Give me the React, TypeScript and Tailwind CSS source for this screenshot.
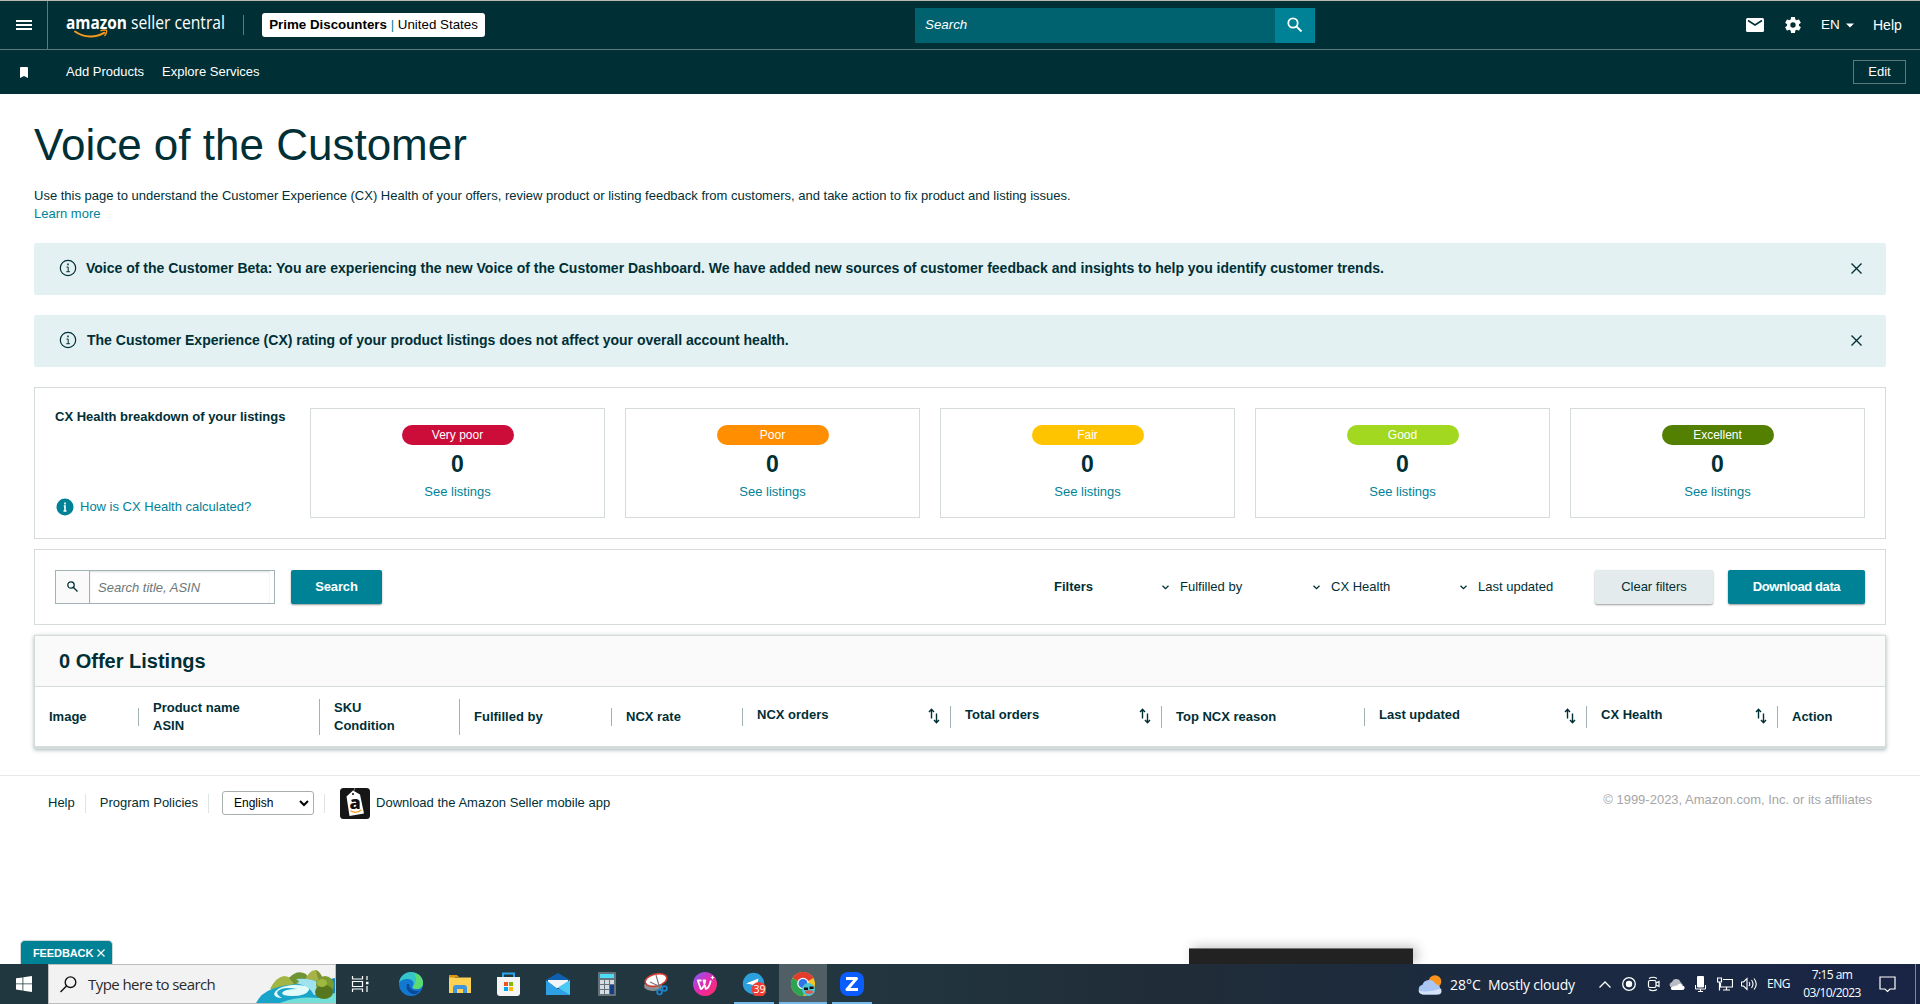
import { FC, ReactNode } from 'react';

const ratings = [
  { label: 'Very poor', color: 'bg-[#cc0c39]' },
  { label: 'Poor', color: 'bg-[#ff8f00]' },
  { label: 'Fair', color: 'bg-[#ffc400]' },
  { label: 'Good', color: 'bg-[#a2d820]' },
  { label: 'Excellent', color: 'bg-[#538000]' },
];

const filters = [
  { label: 'Fulfilled by', width: 'w-[151px]' },
  { label: 'CX Health', width: 'w-[147px]' },
  { label: 'Last updated', width: 'w-[136px]' },
];

interface Column {
  lines: string[];
  width: string;
  sortable?: boolean;
}

const columns: Column[] = [
  { lines: ['Image'], width: 'w-[104px]' },
  { lines: ['Product name', 'ASIN'], width: 'w-[181px]' },
  { lines: ['SKU', 'Condition'], width: 'w-[140px]' },
  { lines: ['Fulfilled by'], width: 'w-[152px]' },
  { lines: ['NCX rate'], width: 'w-[131px]' },
  { lines: ['NCX orders'], width: 'w-[208px]', sortable: true },
  { lines: ['Total orders'], width: 'w-[211px]', sortable: true },
  { lines: ['Top NCX reason'], width: 'w-[203px]' },
  { lines: ['Last updated'], width: 'w-[222px]', sortable: true },
  { lines: ['CX Health'], width: 'w-[191px]', sortable: true },
  { lines: ['Action'], width: 'w-[94px]' },
];

const Logo: FC = () => (
  <svg className="ml-[14px] h-[34px] w-[166px]" viewBox="-4 -2 166 34">
    <text x="0" y="19" textLength="61" lengthAdjust="spacingAndGlyphs" fill="#fff" fontFamily="'Open Sans', sans-serif" fontWeight="700" fontSize="18">amazon</text>
    <text x="65" y="18.500" textLength="94" lengthAdjust="spacingAndGlyphs" fill="#fff" fontFamily="'Open Sans', sans-serif" fontSize="18.500">seller central</text>
    <path d="M9 21.500c9 6.500 21 6.500 29.500 1.200" fill="none" stroke="#f7981d" strokeWidth="2" strokeLinecap="round" />
    <path d="M35 20.700c2-.9 5-.9 5.600-.2.500.9-.4 3.600-1.800 5" fill="none" stroke="#f7981d" strokeWidth="1.300" strokeLinecap="round" />
  </svg>
);

const Header: FC = () => (
  <header className="bg-[#002f36] text-[13px] text-white">
    <div className="flex h-[50px] items-center border-t border-b border-t-[#b9b9ae] border-b-[#5c7a7e]">
      <button className="flex h-[48px] w-[48px] items-center justify-center border-r border-[#5c7a7e]">
        <svg width="16" height="12" viewBox="0 0 16 12" fill="#fff">
          <path d="M0 1h16v2H0zM0 5h16v2H0zM0 9h16v2H0z" />
        </svg>
      </button>
      <Logo />
      <div className="ml-[15px] h-5 w-px bg-[#5c7a7e]" />
      <div className="ml-[18px] flex h-6 w-[223px] items-center justify-center rounded-[3px] bg-white text-[13.330px] whitespace-pre text-black">
        <b>Prime Discounters</b>
        <span className="text-[#008296]"> | </span>United States
      </div>
      <div className="ml-[430px] flex h-[35px] w-[400px]">
        <div className="flex flex-1 items-center bg-[#00616f] pl-[10px] text-[13.330px] italic">Search</div>
        <div className="flex w-10 items-center justify-center bg-[#008296]">
          <svg width="16" height="16" viewBox="0 0 16 16" fill="none" stroke="#fff" strokeWidth="1.800">
            <circle cx="6" cy="6" r="4.700" />
            <path d="M9.500 9.500l5 5" />
          </svg>
        </div>
      </div>
      <div className="ml-[431px] flex flex-1 items-center">
        <svg width="18" height="14" viewBox="0 0 18 14">
          <rect width="18" height="14" rx="1.500" fill="#fff" />
          <path d="M2 2.500l7 4.500 7-4.500" fill="none" stroke="#002f36" strokeWidth="1.500" />
        </svg>
        <svg className="ml-[19px]" width="20" height="20" viewBox="0 0 24 24" fill="#fff">
          <path d="M19.140 12.940c.04-.3.060-.61.060-.94s-.02-.64-.07-.94l2.030-1.580a.49.490 0 0 0 .12-.61l-1.920-3.320a.49.490 0 0 0-.59-.22l-2.390.96c-.5-.38-1.030-.7-1.620-.94l-.36-2.540a.48.480 0 0 0-.48-.41h-3.840c-.24 0-.43.170-.47.410l-.36 2.540c-.59.240-1.130.570-1.620.940l-2.390-.96a.48.480 0 0 0-.59.220L2.740 8.870c-.12.210-.08.470.120.610l2.030 1.580c-.05.3-.09.630-.09.940s.02.640.070.940l-2.030 1.580a.49.490 0 0 0-.12.610l1.920 3.320c.12.220.370.290.590.220l2.390-.96c.5.380 1.030.7 1.620.940l.36 2.540c.05.240.240.410.480.410h3.840c.24 0 .44-.17.470-.41l.36-2.540c.59-.24 1.130-.56 1.620-.94l2.390.96c.22.080.470 0 .59-.22l1.920-3.320a.48.480 0 0 0-.12-.61zM12 15.200a3.200 3.200 0 1 1 0-6.400 3.200 3.200 0 0 1 0 6.400z" />
        </svg>
        <span className="ml-[18px] w-[19px] text-[13.500px]">EN</span>
        <svg className="ml-[6px]" width="8" height="5" viewBox="0 0 8 5"><path d="M0 .5h8l-4 4z" fill="#fff" /></svg>
        <span className="ml-[19px] text-[14px]">Help</span>
      </div>
    </div>
    <div className="flex h-11 items-center">
      <svg className="ml-5" width="8" height="11" viewBox="0 0 8 11"><path d="M0 1q0-1 1-1h6q1 0 1 1v10L4 9l-4 2z" fill="#fff" /></svg>
      <span className="ml-[38px]">Add Products</span>
      <span className="ml-[18px]">Explore Services</span>
      <span className="mr-[14px] ml-auto flex h-6 w-[53px] items-center justify-center border border-[#5c7a7e]">Edit</span>
    </div>
  </header>
);

const Banner: FC<{ children: ReactNode }> = ({ children }) => (
  <div className="mb-5 flex h-[52px] items-center rounded-[2px] bg-[#e3f1f2] pr-[24px] pl-[25px] text-[14px] font-bold whitespace-nowrap">
    <svg className="-mt-[2px]" width="18" height="18" viewBox="0 0 18 18" fill="none" stroke="#002f36">
      <circle cx="9" cy="9" r="7.700" strokeWidth="1.200" />
      <path d="M7.500 8h1.700v4.500M7.300 12.700h3.600" />
      <path d="M9 4.500v1.700" strokeWidth="1.500" />
    </svg>
    {children}
    <svg className="-mt-[2px] ml-auto" width="11" height="11" viewBox="0 0 11 11" stroke="#002f36" strokeWidth="1.400">
      <path d="M.5.5l10 10M10.500.5l-10 10" />
    </svg>
  </div>
);

const HealthBreakdown: FC = () => (
  <section className="flex h-[152px] border border-[#d5dbdb] pt-5 pl-5">
    <div className="flex w-[255px] flex-col whitespace-nowrap">
      <b className="leading-[18px]">CX Health breakdown of your listings</b>
      <div className="mt-[71px] flex items-center text-[#008296]">
        <svg className="mr-[6px] ml-[1px]" width="18" height="18" viewBox="0 0 18 18">
          <circle cx="9" cy="9" r="8.500" fill="#008296" />
          <path d="M9 4.500v2M7.800 8H9v5M7.500 13h3" stroke="#fff" strokeWidth="1.600" fill="none" />
        </svg>
        How is CX Health calculated?
      </div>
    </div>
    <div className="flex gap-5">
      {ratings.map((rating) => (
        <div key={rating.label} className="flex h-[110px] w-[295px] flex-col items-center border border-[#d5dbdb] pt-4">
          <span className={`${rating.color} flex h-5 w-[112px] items-center justify-center rounded-full text-[12px] text-white`}>
            {rating.label}
          </span>
          <span className="mt-[5px] text-[23px] leading-[28px] font-bold">0</span>
          <span className="mt-[5px] leading-[18px] text-[#008296]">See listings</span>
        </div>
      ))}
    </div>
  </section>
);

const FilterBar: FC = () => (
  <section className="mt-[10px] flex h-[76px] items-center border border-[#d5dbdb] px-5">
    <div className="flex h-[34px] w-[220px] border border-[#a2b1b3]">
      <div className="flex w-[34px] items-center justify-center border-r border-[#a2b1b3] bg-[#fafafa]">
        <svg className="-mt-[2px]" width="11" height="11" viewBox="0 0 11 11" fill="none" stroke="#002f36" strokeWidth="1.300">
          <circle cx="4" cy="4" r="3.200" />
          <path d="M6.500 6.500l4 4" />
        </svg>
      </div>
      <input
        className="w-[180px] pt-[2px] pl-2 text-[13px] italic shadow-[inset_0_1px_2px_rgba(0,47,54,0.15)] outline-none placeholder:text-[#6c7778]"
        placeholder="Search title, ASIN"
      />
    </div>
    <button className="ml-4 h-[34px] w-[91px] rounded-[2px] bg-[#008296] font-bold tracking-[-0.010em] text-white shadow-[0_1px_2px_rgba(0,0,0,0.4)]">Search</button>
    <b className="ml-auto w-[107px]">Filters</b>
    {filters.map((filter) => (
      <div key={filter.label} className={`${filter.width} flex items-center`}>
        <svg className="mr-[11px] ml-[1px]" width="7" height="5" viewBox="0 0 7 5" fill="none" stroke="#002f36" strokeWidth="1.300">
          <path d="M.5.700l3 3 3-3" />
        </svg>
        {filter.label}
      </div>
    ))}
    <button className="h-[34px] w-[118px] rounded-[2px] bg-[#e3ebec] shadow-[0_1px_2px_rgba(0,0,0,0.4)]">Clear filters</button>
    <button className="ml-[15px] h-[34px] w-[137px] rounded-[2px] bg-[#008296] font-bold tracking-[-0.030em] text-white shadow-[0_1px_2px_rgba(0,0,0,0.4)]">Download data</button>
  </section>
);

const Listings: FC = () => (
  <section className="mt-[10px] h-[114px] border border-b-[3px] border-[#d5dbdb] shadow-[0_1px_4px_rgba(0,47,54,0.35)]">
    <h2 className="flex h-[51px] items-center border-b border-[#d5dbdb] bg-[#fafafa] pl-6 text-[20px] font-bold">0 Offer Listings</h2>
    <div className="flex h-[60px] items-center font-bold whitespace-nowrap">
      {columns.map((column, i) => (
        <div
          key={i}
          className={`${column.width} ${column.sortable ? 'h-[22px]' : ''} ${i < columns.length - 1 ? 'border-r border-[#a2b1b3]' : ''} flex justify-between pl-[14px] leading-[18px]`}
        >
          <div>
            {column.lines.map((line) => <div key={line}>{line}</div>)}
          </div>
          {column.sortable && (
            <svg className="mt-[2px] mr-[10px]" width="12" height="16" viewBox="0 0 12 16" fill="none" stroke="#002f36" strokeWidth="1.400">
              <path d="M3.500 10.500V1.500M1 4l2.500-2.700L6 4M8.500 5.500v9M6 12l2.500 2.700L11 12" />
            </svg>
          )}
        </div>
      ))}
    </div>
  </section>
);

const Footer: FC = () => (
  <footer className="mt-[26px] flex h-[60px] items-start border-t border-[#e7e9e9] pt-[11px]">
    <div className="ml-12 flex h-8 items-center whitespace-nowrap">
      <span>Help</span>
      <i className="mr-[14px] ml-[10px] h-[19px] w-px bg-[#e0e4e4]" />
      <span>Program Policies</span>
      <i className="mr-[13px] ml-[10px] h-[19px] w-px bg-[#e0e4e4]" />
      <div className="flex h-6 w-[92px] items-center justify-between rounded-[3px] border border-[#a8aeae] pr-[4px] pl-[11px] text-[12px] text-black">
        English
        <svg width="10" height="7" viewBox="0 0 10 7" fill="none" stroke="#000" strokeWidth="2"><path d="M1 1l4 4 4-4" /></svg>
      </div>
      <i className="mr-[15px] ml-[10px] h-[19px] w-px bg-[#e0e4e4]" />
      <svg className="mr-[6px]" width="30" height="31" viewBox="0 0 30 31">
        <rect width="30" height="31" rx="3.500" fill="#161616" />
        <path d="M15 0q-3 5-1.500 8" stroke="#888" fill="none" />
        <path d="M6.500 8.500L13 2.500l7 4L24 25.500 9.500 28z" fill="#fff" />
        <circle cx="13" cy="6" r="1.100" fill="#161616" />
        <text x="9.500" y="20.500" fontFamily="'Open Sans', sans-serif" fontWeight="800" fontSize="18" fill="#111">a</text>
        <path d="M10.500 22.800q6 3.500 11-1" stroke="#f7981d" strokeWidth="1.300" fill="none" />
      </svg>
      Download the Amazon Seller mobile app
    </div>
    <span className="mt-[3px] mr-12 ml-auto text-[#a6a6a6]">© 1999-2023, Amazon.com, Inc. or its affiliates</span>
  </footer>
);

const TaskIcon: FC<{ active?: boolean; open?: boolean; children: ReactNode }> = ({ active, open, children }) => (
  <div className="flex h-10 w-[49px] flex-col items-center pl-px">
    <div className={`${active ? 'w-12 bg-[#4f5f65]' : 'w-10'} flex h-[38px] items-center justify-center pt-[2px]`}>
      <svg width="24" height="24" viewBox="0 0 24 24">{children}</svg>
    </div>
    {open && <div className={`${active ? 'w-12' : 'w-10'} h-[2px] bg-[#76b9ed]`} />}
  </div>
);

// river and hills shown at the end of the search box
const SearchArt: FC = () => (
  <svg className="ml-auto" width="79" height="38" viewBox="0 0 79 38">
    <path d="M14 24Q20 12 28 11q6 0 10 6l4 10z" fill="#a3b545" />
    <path d="M33 13q8-9 17-4l6 10H38z" fill="#6f9436" />
    <path d="M48 18Q52 5 60 5q5 2 8 12l2 8H52z" fill="#a7b348" />
    <path d="M60 5q5 2 8 12v6q-6-6-8-18z" fill="#7e9334" />
    <path d="M66 16l13-3v25H62z" fill="#1b87b5" />
    <path d="M0 38q5-10 16-14 14-5 30-5-8-6 3-5 16 1 20 11 4 8 1 13z" fill="#19a5c9" />
    <path d="M40 14q16-1 22 4l14-3-8 8q2 6-10 7-4-9-18-12 6-1 0-4z" fill="#9fe3ef" />
    <path d="M18 29q3-8 20-9 16 0 15 5-3 6-17 6-10 0-10-3 2-4 15-4-14-3-19 2-3 3 4 7-7 0-8-4z" fill="#e3fafa" />
    <path d="M24 38q18-7 38-5l17-5v10z" fill="#72e0d8" />
    <ellipse cx="69" cy="20" rx="9" ry="9" fill="#7b9b30" />
    <ellipse cx="68" cy="27" rx="9" ry="7" fill="#56761f" />
    <ellipse cx="66" cy="18" rx="5" ry="4" fill="#9fb840" />
  </svg>
);

const Taskbar: FC = () => (
  <div className="flex h-10 items-center bg-[linear-gradient(90deg,#21373f_0%,#22363f_45%,#202c37_61%,#1b2a41_80%,#192445_100%)] font-['Open_Sans','Noto_Sans',sans-serif] whitespace-nowrap text-white">
    <div className="flex w-12 items-center justify-center">
      <svg width="16" height="16" viewBox="0 0 16 16" fill="#fff"><path d="M0 2.300L6.500 1.400v6.100H0zM7.300 1.300L16 0v7.500H7.300zM0 8.300h6.500v6.200L0 13.600zM7.300 8.300H16V16l-8.700-1.300z" /></svg>
    </div>
    <div className="flex h-10 w-[288px] items-center border border-[#bdbdbd] bg-[#f2f2f2] text-[#2b2b2b]">
      <svg className="ml-[11px]" width="17" height="17" viewBox="0 0 17 17" fill="none" stroke="#111" strokeWidth="1.400"><circle cx="10.500" cy="6.200" r="5.300" /><path d="M6.500 10L.5 16" /></svg>
      <span className="ml-[11px] text-[15px] tracking-[-0.038em]">Type here to search</span>
      <SearchArt />
    </div>
    <div className="mr-[2px] flex w-12 justify-center">
      <svg width="24" height="24" viewBox="0 0 24 24" fill="none" stroke="#fff" strokeWidth="1.200">
        <path d="M4.500 4v3h10V4M4.500 20v-3h10v3M4.500 9.500h10v5h-10zM19 4v4M19 14v6" />
        <path d="M18 11h2.500" strokeWidth="2.500" />
      </svg>
    </div>
    <TaskIcon>
      <circle cx="12" cy="12" r="12" fill="#1379d0" />
      <path d="M0 11C1 4 6 0 12 0c7 0 12 5 12 11 0 4-3 6-7 6-3 0-4-1-3-3 2-4-1-7-5-7-5 0-8 2-9 4z" fill="#35c6c9" />
      <path d="M15 1c6 1 9 6 9 10 0 4-3 6-7 6-3 0-4-1-3-3 4-3 4-8 1-13z" fill="#5edb70" />
      <path d="M8 12c-2 6 3 11 9 10l5-4c-4 2-12 1-12-6z" fill="#0c4a9c" />
    </TaskIcon>
    <TaskIcon>
      <path d="M1 3h8l2 2h-4v5H1z" fill="#d99412" />
      <path d="M1 5.500h22V21H1z" fill="#ffd253" />
      <path d="M5 21v-5q0-3 3-3h8q3 0 3 3v5h-4v-4H9v4z" fill="#3e95db" />
    </TaskIcon>
    <TaskIcon>
      <path d="M6 6V1.500h11V6" fill="none" stroke="#2aa5ea" strokeWidth="2" />
      <path d="M0 5h23v16q0 3-3 3H3q-3 0-3-3z" fill="#f4f4f4" />
      <path d="M7 10h4v4H7z" fill="#f25022" />
      <path d="M12 10h4v4h-4z" fill="#7fba00" />
      <path d="M7 15h4v4H7z" fill="#00a4ef" />
      <path d="M12 15h4v4h-4z" fill="#ffb900" />
    </TaskIcon>
    <TaskIcon>
      <path d="M0 8l12-7 12 7z" fill="#0f5fb0" />
      <path d="M2 8h20v8H2z" fill="#f2f5f8" />
      <path d="M0 8l12 9L24 8v15H0z" fill="#2f9fe6" />
      <path d="M12 15.500L24 8v15z" fill="#4cc8f4" />
    </TaskIcon>
    <TaskIcon>
      <rect x="3" width="18" height="24" rx="1" fill="#66737c" />
      <path d="M5 2h14v4H5z" fill="#4ddbf5" />
      <path d="M5 8h4v4H5zM10 8h4v4h-4zM15 8h4v4h-4zM5 13h4v4H5zM10 13h4v4h-4zM5 18h4v4H5zM10 18h4v4h-4z" fill="#d5dde3" />
      <path d="M15 13h4v9h-4z" fill="#143f86" />
    </TaskIcon>
    <TaskIcon>
      <ellipse cx="9" cy="14" rx="9" ry="5" fill="#8b8f93" />
      <ellipse cx="12" cy="8" rx="11" ry="6" transform="rotate(-14 12 8)" fill="#fff" stroke="#d13b31" strokeWidth="1.600" />
      <path d="M12 3l4 14M6 10l13 6" stroke="#777" strokeWidth="1.200" />
      <g fill="none" stroke="#1c83cc" strokeWidth="1.800"><circle cx="15.500" cy="20" r="2.400" /><circle cx="20.500" cy="16.500" r="2.400" /></g>
    </TaskIcon>
    <TaskIcon>
      <defs><linearGradient id="wps" x1="0" y1="0" x2="1" y2="1"><stop offset="0" stopColor="#7a5cff" /><stop offset=".5" stopColor="#e52ab0" /><stop offset="1" stopColor="#ff2d5b" /></linearGradient></defs>
      <circle cx="12" cy="12" r="12" fill="url(#wps)" />
      <path d="M8.500 8.500H4.800l3 8.500q3-.5 4.500-8.500H10.500l2.300 8.500q3.500-1 5-8.500" fill="none" stroke="#fff" strokeWidth="1.800" strokeLinejoin="round" />
      <path d="M19.500 3.800v3.400M17.800 5.500h3.400" stroke="#fff" strokeWidth="1.200" />
    </TaskIcon>
    <TaskIcon open>
      <circle cx="11.500" cy="11.500" r="10.700" fill="#2ba0dc" />
      <path d="M4 11.500L16.500 6.500l-2 9-5-3z" fill="#fff" />
      <circle cx="17" cy="17.500" r="7.500" fill="#ef3e36" />
      <text x="11.500" y="21.300" fontSize="10.500" fontFamily="'Open Sans', sans-serif" fill="#fff">39</text>
    </TaskIcon>
    <TaskIcon open active>
      <circle cx="12" cy="12" r="12" fill="#f8c522" />
      <path d="M12 12L1.600 6A12 12 0 0 1 22.400 6z" fill="#e33b2e" />
      <path d="M1.600 6A12 12 0 0 0 12 24l5-9-5-3z" fill="#2da44f" />
      <circle cx="12" cy="11.500" r="5.800" fill="#fff" />
      <circle cx="12" cy="11.500" r="4.500" fill="#2f75e8" />
      <circle cx="17.500" cy="17.500" r="6.500" fill="#4cc6d4" />
      <path d="M13 15.500h4v2.500h-4zM18.500 14.500h4v2.500h-4z" fill="#111" />
      <ellipse cx="18" cy="20" rx="4" ry="1.800" fill="#e2564f" />
    </TaskIcon>
    <TaskIcon open>
      <rect width="24" height="24" rx="8" fill="#0b5cff" />
      <path d="M6 6.500h10.500L7 17.500h11" fill="none" stroke="#fff" strokeWidth="3" strokeLinejoin="round" />
    </TaskIcon>
    <div className="ml-auto flex h-10 items-center">
      <svg className="mt-[2px]" width="24" height="20" viewBox="0 0 24 20">
        <circle cx="17" cy="6.500" r="6.300" fill="#f9931e" />
        <path d="M5 19.500a5 5 0 0 1-.5-9.800A7 7 0 0 1 17.500 9 5.500 5.500 0 0 1 19 19.500z" fill="#a9c6f4" />
        <path d="M5 19.500q-4-.5-4.500-4 8 2.500 22.500-2 2 6-4 6z" fill="#d5e2fa" />
      </svg>
      <span className="ml-2 w-[38px] text-[14px]">28°C</span>
      <span className="w-[111px] text-[14px] tracking-[-0.016em]">Mostly cloudy</span>
      <svg width="12" height="7" viewBox="0 0 12 7" fill="none" stroke="#fff" strokeWidth="1.300"><path d="M.5 6.500L6 1l5.500 5.500" /></svg>
      <svg className="ml-[11px]" width="14" height="14" viewBox="0 0 14 14"><circle cx="7" cy="7" r="6.300" fill="none" stroke="#fff" strokeWidth="1.300" /><circle cx="7" cy="7" r="3.200" fill="#fff" /></svg>
      <svg className="ml-[11px]" width="13" height="16" viewBox="0 0 13 16" fill="none" stroke="#fff" strokeWidth="1.200"><path d="M2 2.500Q6 0 10 2.500M2 13.500q4 2.500 8 0M9 7l3-1.500v5L9 9" /><rect x="1.500" y="4.500" width="7.500" height="7" rx="1.500" /></svg>
      <svg className="ml-[9px]" width="16" height="11" viewBox="0 0 16 11"><path d="M1.500 8A3 3 0 0 1 3 3a4.500 4.500 0 0 1 8.500 0L14 6z" fill="#b8bcc4" /><path d="M3 11Q.5 9.500 3 7.500l5-1q3-3.500 5.500 0Q16 7 15.500 9.500 15 11 13 11z" fill="#fff" /></svg>
      <svg className="ml-[10px]" width="11" height="16" viewBox="0 0 11 16"><rect x="2" width="7" height="11.500" rx="1" fill="#fff" /><path d="M.5 9v4h10V9M5.500 13v2.500M3 15.500h5" fill="none" stroke="#fff" /></svg>
      <svg className="ml-[11px]" width="16" height="14" viewBox="0 0 16 14" fill="none" stroke="#fff" strokeWidth="1.200"><path d="M6 2.500h9.500v7.500h-12V6M9.500 10v3M6 13h7M.5 1h4v4h-4zM2.500 5v8.500" /></svg>
      <svg className="ml-[8px]" width="17" height="14" viewBox="0 0 17 14" fill="none" stroke="#fff" strokeWidth="1.100"><path d="M.5 5h2L6 1.500v11L2.500 9h-2zM8 5q1.500 2 0 4M10.500 3q3 4 0 8M13 1.500q4.500 5.500 0 11" /></svg>
      <span className="ml-[9px] w-[36px] text-[12px] tracking-[-0.040em]">ENG</span>
      <div className="flex w-[58px] flex-col items-center text-[12px] leading-[18px] tracking-[-0.050em]">
        <span>7:15 am</span>
        <span>03/10/2023</span>
      </div>
      <svg className="ml-[18px]" width="17" height="17" viewBox="0 0 17 17" fill="none" stroke="#fff" strokeWidth="1.200"><path d="M1 1h15v12h-5l-2.500 2.500L6 13H1z" /></svg>
      <div className="mr-1 ml-[19px] h-10 w-px bg-[#7d879b]" />
    </div>
  </div>
);

const App: FC = () => {
  return (
    <div className="relative flex h-[1004px] w-[1920px] flex-col overflow-hidden bg-white font-['Liberation_Sans',Arial,sans-serif] text-[13px] text-[#002f36]">
      <Header />
      <main className="mx-[34px] pt-[24px]">
        <h1 className="text-[44px] leading-[54px]">Voice of the Customer</h1>
        <p className="mt-[15px] leading-[18px]">
          Use this page to understand the Customer Experience (CX) Health of your offers, review product or listing feedback from customers, and take action to fix product and listing issues.
        </p>
        <p className="mb-[20px] leading-[18px] text-[#008296]">Learn more</p>
        <Banner>
          <span className="-mt-[2px] ml-[9px]">
            Voice of the Customer Beta: You are experiencing the new Voice of the Customer Dashboard. We have added new sources of customer feedback and insights to help you identify customer trends.
          </span>
        </Banner>
        <Banner>
          <span className="-mt-[2px] ml-[10px]">The Customer Experience (CX) rating of your product listings does not affect your overall account health.</span>
        </Banner>
        <HealthBreakdown />
        <FilterBar />
        <Listings />
      </main>
      <Footer />
      <div className="mt-auto">
        <Taskbar />
      </div>
      <div className="absolute bottom-10 left-[20px] flex h-[24px] w-[93px] items-center rounded-t-[5px] border border-b-0 border-[#cfd6d6] bg-[#008296] pt-px pl-3 text-[11px] font-bold tracking-[-0.010em] text-white">
        FEEDBACK
        <svg className="ml-[4px]" width="8" height="8" viewBox="0 0 8 8" stroke="#fff" strokeWidth="1.200"><path d="M.5.5l7 7M7.500.5l-7 7" /></svg>
      </div>
      <div className="absolute bottom-10 left-[1189px] h-4 w-[224px] border-t border-[#777] bg-[#222] shadow-[4px_-1px_12px_rgba(0,0,0,0.25)] [clip-path:inset(-20px_-20px_0_-20px)]" />
    </div>
  );
};

export default App;
